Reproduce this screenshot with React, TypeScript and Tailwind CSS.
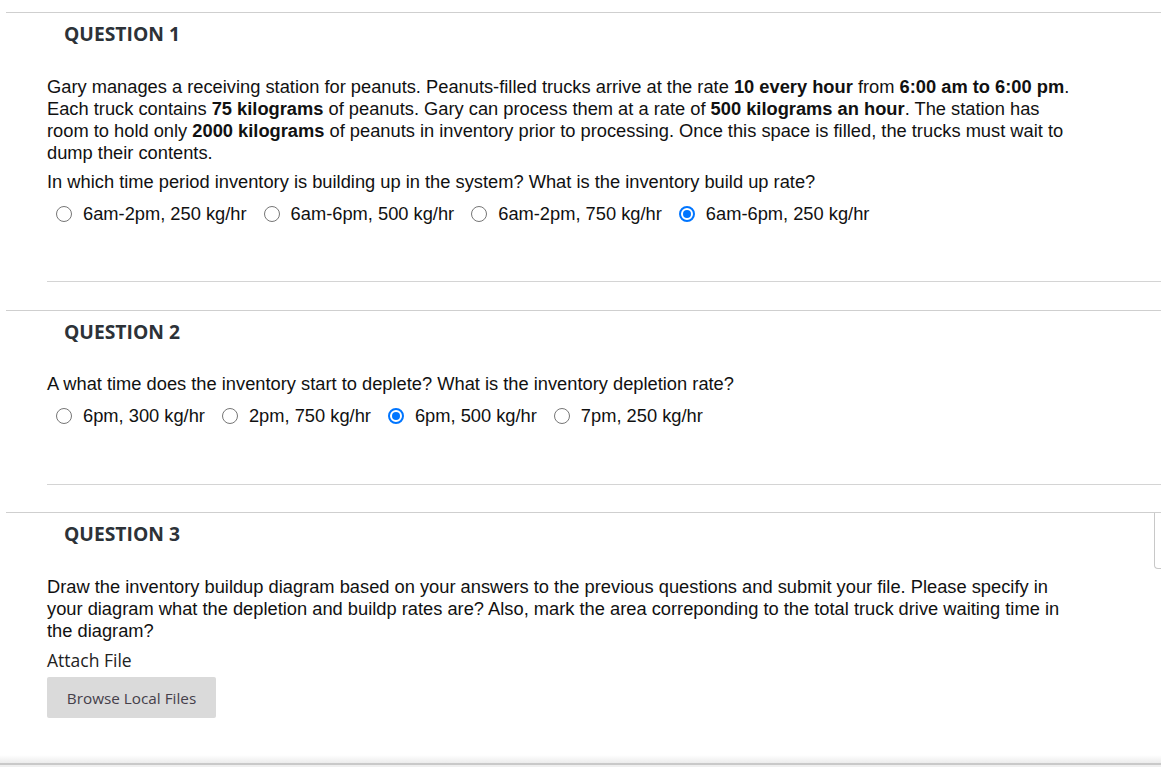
import React from 'react'

type Opt = { label: string; checked?: boolean }

const Radio = ({ checked }: { checked?: boolean }) =>
  checked ? (
    <span className="w-4 h-4 rounded-full border-2 border-[#0075ff] flex items-center justify-center shrink-0">
      <span className="w-2 h-2 rounded-full bg-[#0075ff]" />
    </span>
  ) : (
    <span className="w-4 h-4 rounded-full border border-[#767676] shrink-0" />
  )

const Options = ({ items }: { items: Opt[] }) => (
  <div className="flex items-center gap-[17px] ml-[9px] mt-[10px] h-[22px]">
    {items.map((o) => (
      <label key={o.label} className="flex items-center gap-[11px]">
        <Radio checked={o.checked} />
        <span>{o.label}</span>
      </label>
    ))}
  </div>
)

const Heading = ({ children }: { children: React.ReactNode }) => (
  <h2 className="pl-[58px] pt-[9px] text-[19.3px] leading-6 font-bold text-[#2d3238] font-['Open_Sans',sans-serif]">
    {children}
  </h2>
)

const Section = ({ children }: { children: React.ReactNode }) => (
  <section className="relative border-t border-[#cfcfcf] ml-[6px]">{children}</section>
)

export default function App() {
  return (
    <div className="w-[1161px] h-[767px] overflow-hidden bg-white text-[18.3px] leading-[22px] text-[#111] font-['Liberation_Sans',Arial,sans-serif] flex flex-col">
      <div className="h-3 shrink-0" />

      <Section>
        <Heading>QUESTION 1</Heading>
        <div className="pl-[41px] pr-[80px] pt-[30px]">
          <p>
            Gary manages a receiving station for peanuts. Peanuts-filled trucks arrive at the rate{' '}
            <b>10 every hour</b> from <b>6:00 am to 6:00 pm</b>. Each truck contains{' '}
            <b>75 kilograms</b> of peanuts. Gary can process them at a rate of{' '}
            <b>500 kilograms an hour</b>. The station has room to hold only{' '}
            <b>2000 kilograms</b> of peanuts in inventory prior to processing. Once this space is
            filled, the trucks must wait to dump their contents.
          </p>
          <p className="mt-[7px]">
            In which time period inventory is building up in the system? What is the inventory
            build up rate?
          </p>
          <Options
            items={[
              { label: '6am-2pm, 250 kg/hr' },
              { label: '6am-6pm, 500 kg/hr' },
              { label: '6am-2pm, 750 kg/hr' },
              { label: '6am-6pm, 250 kg/hr', checked: true },
            ]}
          />
        </div>
        <div className="mt-[56px] ml-[41px] border-t border-[#d4d4d4]" />
        <div className="h-[28px]" />
      </Section>

      <Section>
        <Heading>QUESTION 2</Heading>
        <div className="pl-[41px] pt-[29px]">
          <p>A what time does the inventory start to deplete? What is the inventory depletion rate?</p>
          <Options
            items={[
              { label: '6pm, 300 kg/hr' },
              { label: '2pm, 750 kg/hr' },
              { label: '6pm, 500 kg/hr', checked: true },
              { label: '7pm, 250 kg/hr' },
            ]}
          />
        </div>
        <div className="mt-[57px] ml-[41px] border-t border-[#d4d4d4]" />
        <div className="h-[27px]" />
      </Section>

      <Section>
        <div className="absolute right-0 top-0 w-[7px] h-[56px] border-l border-b border-[#c8c8c8] rounded-bl-[4px] bg-white" />
        <Heading>QUESTION 3</Heading>
        <div className="pl-[41px] pr-[80px] pt-[30px]">
          <p>
            Draw the inventory buildup diagram based on your answers to the previous questions and
            submit your file. Please specify in your diagram what the depletion and buildp rates
            are? Also, mark the area correponding to the total truck drive waiting time in the
            diagram?
          </p>
          <div className="mt-[7px] text-[17.5px] font-['Open_Sans',sans-serif] text-[#222]">Attach File</div>
          <button className="mt-[6px] w-[169px] h-[41px] rounded-[2px] bg-[#dadada] text-[15.3px] text-[#45404a] font-['Open_Sans',sans-serif]">
            Browse Local Files
          </button>
        </div>
      </Section>

      <div className="flex-1" />
      <div className="h-[8px] shrink-0 bg-gradient-to-b from-white to-[#ececec]" />
      <div className="h-[2px] shrink-0 bg-[#c9c9c9]" />
      <div className="h-[2px] shrink-0 bg-[#efefef]" />
    </div>
  )
}
